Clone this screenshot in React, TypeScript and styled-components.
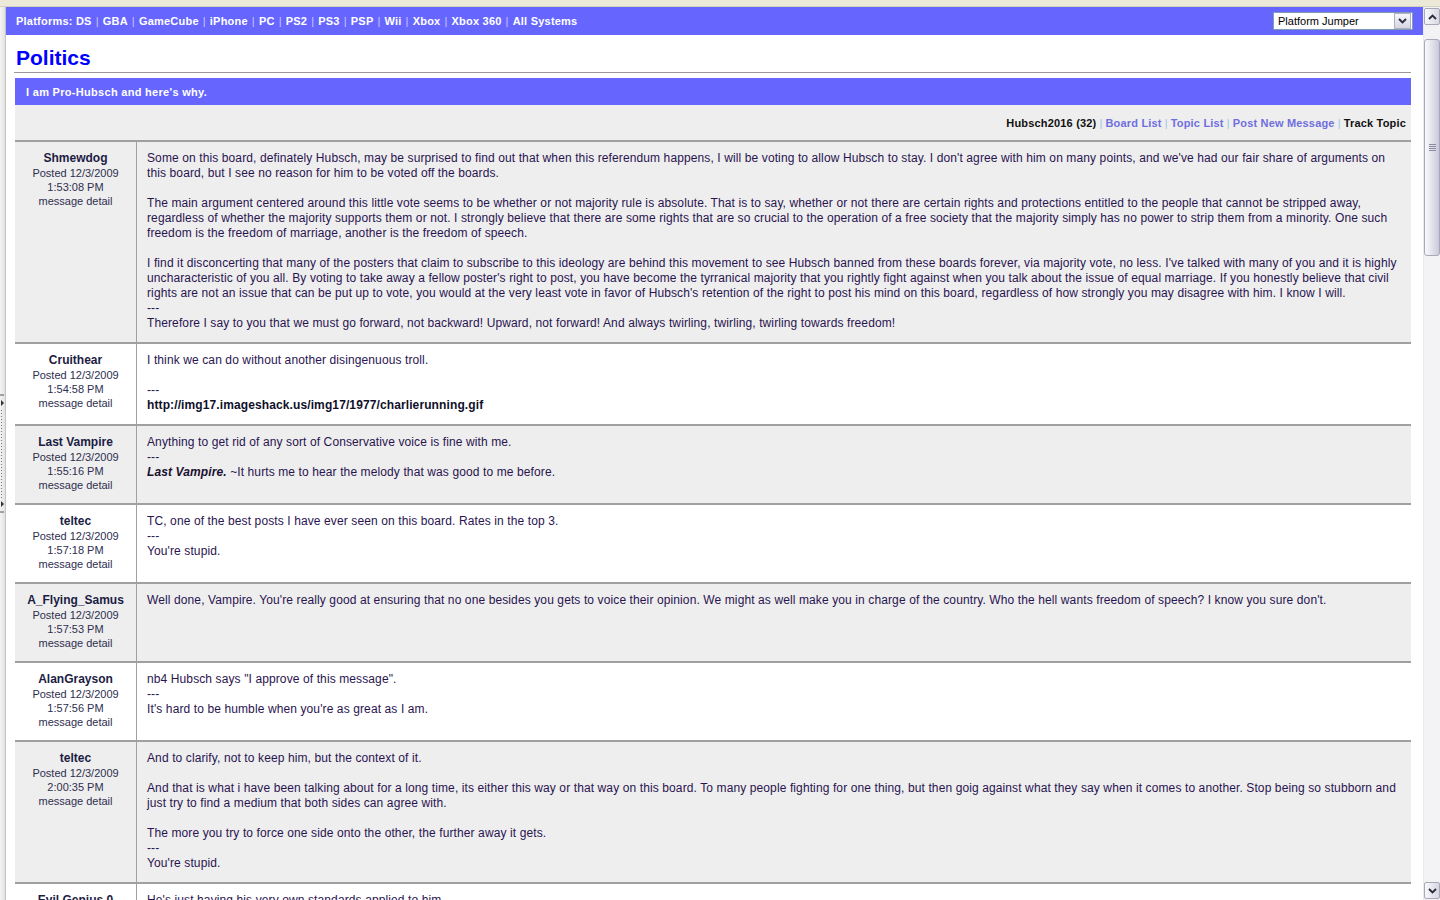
import React from 'react'
import styled, { createGlobalStyle } from 'styled-components'

const GlobalStyle = createGlobalStyle`
    html, body {
        margin: 0;
        padding: 0;
        overflow: hidden;
        background: #ece9d8;
        font-family: "Liberation Sans", Arial, sans-serif;
    }
`
const Frame = styled.div`
    width: 1440px;
    height: 900px;
    display: flex;
    flex-direction: column;
    overflow: hidden;
`
const TopChrome = styled.div`
    height: 6px;
    flex-shrink: 0;
    background: #ece9d8;
    border-bottom: 1px solid #d6d2c2;
`
const Body = styled.div`
    flex: 1;
    display: flex;
    min-height: 0;
`
const LeftEdge = styled.div`
    width: 5px;
    flex-shrink: 0;
    background: linear-gradient(to right, #f4f4f4, #e2e2e2);
    border-right: 1px solid #c4c4c4;
    display: flex;
    flex-direction: column;
    justify-content: center;
`
const Page = styled.div`
    flex: 1;
    background: #fff;
    overflow: hidden;
    min-width: 0;
`
const NavBar = styled.div`
    height: 28px;
    background: #6666ff;
    display: flex;
    align-items: center;
    justify-content: space-between;
    padding: 0 10px;
`
const NavLinks = styled.div`
    color: #fff;
    font-size: 11px;
    font-weight: bold;
    letter-spacing: 0.22px;
    white-space: nowrap;
`
const NavSep = styled.span`
    color: #c8c8ff;
    font-weight: normal;
    margin: 0 4px;
`
const Jumper = styled.div`
    box-sizing: border-box;
    width: 140px;
    height: 18px;
    border: 1px solid #7f9db9;
    background: #fff;
    display: flex;
    align-items: center;
    font-size: 11px;
    color: #000;
    padding: 0 1px 0 4px;
`
const JumperLabel = styled.span`
    flex: 1;
`
const JumperButton = styled.div`
    width: 15px;
    height: 14px;
    border: 1px solid #b0b0c0;
    background: linear-gradient(to bottom, #f6f6fa, #d6d6e2);
    display: flex;
    align-items: center;
    justify-content: center;
`
const Content = styled.div`
    padding: 0 12px 0 9px;
`
const BoardTitle = styled.h1`
    margin: 0 0 0 -1px;
    padding: 10px 0 1px 2px;
    font-size: 21px;
    line-height: 26px;
    font-weight: bold;
    color: #0000ff;
    border-bottom: 1px solid #999;
`
const TopicBar = styled.div`
    margin-top: 5px;
    height: 27px;
    background: #6666ff;
    color: #fff;
    font-size: 11px;
    font-weight: bold;
    letter-spacing: 0.3px;
    display: flex;
    align-items: center;
    padding-left: 11px;
`
const UserBar = styled.div`
    height: 35px;
    background: #eeeeee;
    display: flex;
    align-items: center;
    justify-content: flex-end;
    padding-right: 5px;
    font-size: 11px;
    letter-spacing: 0.18px;
    white-space: nowrap;
`
const UserStrong = styled.span`
    font-weight: bold;
    color: #111;
`
const UserLink = styled.span`
    color: #6f6fde;
    font-weight: bold;
`
const UserSep = styled.span`
    color: #9cc4ea;
    margin: 0 3px;
`
const MessageRow = styled.div<{ $alt: boolean }>`
    display: flex;
    border-top: 2px solid #a0a0a0;
    background: ${p => (p.$alt ? '#eeeeee' : '#ffffff')};
`
const AuthorCell = styled.div`
    width: 121px;
    flex-shrink: 0;
    border-right: 1px solid #a0a0a0;
    text-align: center;
    padding: 9px 0 11px;
    color: #1c1c44;
`
const AuthorName = styled.div`
    font-size: 12px;
    line-height: 15px;
    font-weight: bold;
`
const PostMeta = styled.div`
    font-size: 11px;
    line-height: 14px;
    color: #2e2e50;
`
const MessageCell = styled.div`
    flex: 1;
    padding: 9px 10px 11px;
    font-size: 12px;
    line-height: 15px;
    letter-spacing: 0.11px;
    color: #2a1450;
`
const Sig = styled.b`
    font-style: italic;
    color: #1a1030;
`
const PlainLink = styled.b`
    color: #10102a;
`
const ScrollBar = styled.div`
    width: 16px;
    flex-shrink: 0;
    background: #f3f3f6;
    display: flex;
    flex-direction: column;
    border-left: 1px solid #eaeaf0;
`
const ScrollButton = styled.div`
    height: 15px;
    margin: 1px 0;
    border: 1px solid #a8a8b8;
    border-radius: 2px;
    background: linear-gradient(to right, #f8f8fb, #d8d8e4);
    display: flex;
    align-items: center;
    justify-content: center;
`
const ScrollTrack = styled.div`
    flex: 1;
    padding-top: 13px;
`
const ScrollThumb = styled.div`
    height: 215px;
    border: 1px solid #a8a8bc;
    border-radius: 3px;
    background: linear-gradient(to right, #fafafd, #d4d4e2 80%, #c6c6d6);
    display: flex;
    align-items: center;
    justify-content: center;
`

type Post = {
    name: string
    time: string
    body: React.ReactNode
}

const posts: Post[] = [
    {
        name: 'Shmewdog',
        time: '1:53:08 PM',
        body: (
            <>
                Some on this board, definately Hubsch, may be surprised to find out that when this referendum happens, I will be voting to allow Hubsch to stay. I don't agree with him on many points, and we've had our fair share of arguments on this board, but I see no reason for him to be voted off the boards.<br /><br />
                The main argument centered around this little vote seems to be whether or not majority rule is absolute. That is to say, whether or not there are certain rights and protections entitled to the people that cannot be stripped away, regardless of whether the majority supports them or not. I strongly believe that there are some rights that are so crucial to the operation of a free society that the majority simply has no power to strip them from a minority. One such freedom is the freedom of marriage, another is the freedom of speech.<br /><br />
                I find it disconcerting that many of the posters that claim to subscribe to this ideology are behind this movement to see Hubsch banned from these boards forever, via majority vote, no less. I've talked with many of you and it is highly uncharacteristic of you all. By voting to take away a fellow poster's right to post, you have become the tyrranical majority that you rightly fight against when you talk about the issue of equal marriage. If you honestly believe that civil rights are not an issue that can be put up to vote, you would at the very least vote in favor of Hubsch's retention of the right to post his mind on this board, regardless of how strongly you may disagree with him. I know I will.<br />
                ---<br />
                Therefore I say to you that we must go forward, not backward! Upward, not forward! And always twirling, twirling, twirling towards freedom!
            </>
        ),
    },
    {
        name: 'Cruithear',
        time: '1:54:58 PM',
        body: (
            <>
                I think we can do without another disingenuous troll.<br /><br />
                ---<br />
                <PlainLink>http://img17.imageshack.us/img17/1977/charlierunning.gif</PlainLink>
            </>
        ),
    },
    {
        name: 'Last Vampire',
        time: '1:55:16 PM',
        body: (
            <>
                Anything to get rid of any sort of Conservative voice is fine with me.<br />
                ---<br />
                <Sig>Last Vampire.</Sig> ~It hurts me to hear the melody that was good to me before.
            </>
        ),
    },
    {
        name: 'teltec',
        time: '1:57:18 PM',
        body: (
            <>
                TC, one of the best posts I have ever seen on this board. Rates in the top 3.<br />
                ---<br />
                You're stupid.
            </>
        ),
    },
    {
        name: 'A_Flying_Samus',
        time: '1:57:53 PM',
        body: (
            <>
                Well done, Vampire. You're really good at ensuring that no one besides you gets to voice their opinion. We might as well make you in charge of the country. Who the hell wants freedom of speech? I know you sure don't.
            </>
        ),
    },
    {
        name: 'AlanGrayson',
        time: '1:57:56 PM',
        body: (
            <>
                nb4 Hubsch says "I approve of this message".<br />
                ---<br />
                It's hard to be humble when you're as great as I am.
            </>
        ),
    },
    {
        name: 'teltec',
        time: '2:00:35 PM',
        body: (
            <>
                And to clarify, not to keep him, but the context of it.<br /><br />
                And that is what i have been talking about for a long time, its either this way or that way on this board. To many people fighting for one thing, but then goig against what they say when it comes to another. Stop being so stubborn and just try to find a medium that both sides can agree with.<br /><br />
                The more you try to force one side onto the other, the further away it gets.<br />
                ---<br />
                You're stupid.
            </>
        ),
    },
    {
        name: 'Evil Genius 0',
        time: '2:01:12 PM',
        body: (
            <>
                He's just having his very own standards applied to him.
            </>
        ),
    },
]

const platforms = ['DS', 'GBA', 'GameCube', 'iPhone', 'PC', 'PS2', 'PS3', 'PSP', 'Wii', 'Xbox', 'Xbox 360', 'All Systems']

const Chevron = ({ up }: { up?: boolean }) => (
    <svg width="9" height="6" viewBox="0 0 9 6">
        <path d={up ? 'M1 5 L4.5 1.5 L8 5' : 'M1 1 L4.5 4.5 L8 1'} fill="none" stroke="#2a2a3a" strokeWidth="1.8" />
    </svg>
)

const Splitter = () => (
    <svg width="5" height="120" viewBox="0 0 5 120">
        <line x1="0" y1="1" x2="4" y2="1" stroke="#555" />
        <path d="M1 6 L4 9 L1 12 Z" fill="#333" />
        <line x1="1.5" y1="16" x2="1.5" y2="104" stroke="#777" strokeDasharray="1 2" />
        <path d="M1 107 L4 110 L1 113 Z" fill="#333" />
        <line x1="0" y1="118" x2="4" y2="118" stroke="#555" />
    </svg>
)

const App = () => {
    return (
        <Frame>
            <GlobalStyle />
            <TopChrome />
            <Body>
                <LeftEdge>
                    <Splitter />
                </LeftEdge>
                <Page>
                    <NavBar>
                        <NavLinks>
                            Platforms:{' '}
                            {platforms.map((p, i) => (
                                <React.Fragment key={p}>
                                    {i > 0 && <NavSep>|</NavSep>}
                                    {p}
                                </React.Fragment>
                            ))}
                        </NavLinks>
                        <Jumper>
                            <JumperLabel>Platform Jumper</JumperLabel>
                            <JumperButton><Chevron /></JumperButton>
                        </Jumper>
                    </NavBar>
                    <Content>
                        <BoardTitle>Politics</BoardTitle>
                        <TopicBar>I am Pro-Hubsch and here's why.</TopicBar>
                        <UserBar>
                            <UserStrong>Hubsch2016 (32)</UserStrong>
                            <UserSep>|</UserSep>
                            <UserLink>Board List</UserLink>
                            <UserSep>|</UserSep>
                            <UserLink>Topic List</UserLink>
                            <UserSep>|</UserSep>
                            <UserLink>Post New Message</UserLink>
                            <UserSep>|</UserSep>
                            <UserStrong>Track Topic</UserStrong>
                        </UserBar>
                        {posts.map((post, i) => (
                            <MessageRow key={i} $alt={i % 2 === 0}>
                                <AuthorCell>
                                    <AuthorName>{post.name}</AuthorName>
                                    <PostMeta>Posted 12/3/2009</PostMeta>
                                    <PostMeta>{post.time}</PostMeta>
                                    <PostMeta>message detail</PostMeta>
                                </AuthorCell>
                                <MessageCell>{post.body}</MessageCell>
                            </MessageRow>
                        ))}
                    </Content>
                </Page>
                <ScrollBar>
                    <ScrollButton><Chevron up /></ScrollButton>
                    <ScrollTrack>
                        <ScrollThumb>
                            <svg width="7" height="7" viewBox="0 0 7 7">
                                <path d="M0 0.5 H7 M0 2.5 H7 M0 4.5 H7 M0 6.5 H7" stroke="#8a8aa0" />
                            </svg>
                        </ScrollThumb>
                    </ScrollTrack>
                    <ScrollButton><Chevron /></ScrollButton>
                </ScrollBar>
            </Body>
        </Frame>
    )
}

export default App
